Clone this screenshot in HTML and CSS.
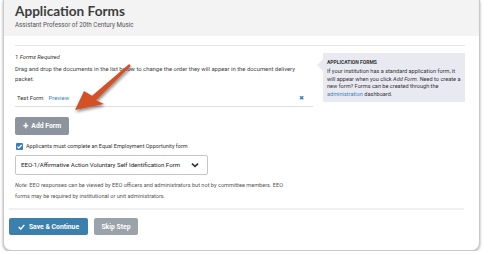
FILE: index.html
```html
<!DOCTYPE html>
<html>
<head>
	<title>Application Forms</title>
	<link rel="stylesheet" href="styles.css">
</head>
<body>
<div class="window">
	<div class="head">
		<h1>Application Forms</h1>
		<p class="sub">Assistant Professor of 20th Century Music</p>
	</div>
	<div class="content">
		<div class="rule"></div>
		<div class="cols">
			<div class="main">
				<p class="req">1 Forms Required</p>
				<p class="help">Drag and drop the documents in the list below to change the order they will appear in the document delivery packet.</p>
				<div class="item">
					<span class="name">Test Form</span>
					<a href="javascript:;" class="link">Preview</a>
					<span class="del">&#x2716;</span>
				</div>
				<a href="javascript:;" class="btn grey add"><span class="plus">+</span> Add Form</a>
				<label class="check"><span class="box"><svg width="7" height="7" viewBox="0 0 10 10"><path d="M2 5.2l2 2 4-4.4" fill="none" stroke="#fff" stroke-width="1.8"/></svg></span>Applicants must complete an Equal Employment Opportunity form</label>
				<div class="select">
					<span>EEO-1/Affirmative Action Voluntary Self Identification Form</span>
					<svg width="8" height="6" viewBox="0 0 10 6"><path d="M1.2 1.2l3.8 3.6 3.8-3.6" fill="none" stroke="#333" stroke-width="2"/></svg>
				</div>
				<p class="note"><i>Note:</i> EEO responses can be viewed by EEO officers and administrators but not by committee members. EEO forms may be required by institutional or unit administrators.</p>
			</div>
			<div class="side">
				<div class="tip">
					<b>APPLICATION FORMS</b>
					<p>If your institution has a standard application form, it will appear when you click <i>Add Form</i>. Need to create a new form? Forms can be created through the <a href="javascript:;" class="link">administration</a> dashboard.</p>
				</div>
			</div>
		</div>
		<div class="foot">
			<a href="javascript:;" class="btn blue"><svg width="7" height="6" viewBox="0 0 10 8"><path d="M1 4l3 3 5-6" fill="none" stroke="#fff" stroke-width="2"/></svg> Save &amp; Continue</a>
			<a href="javascript:;" class="btn grey skip">Skip Step</a>
		</div>
	</div>
	<svg class="arrow" width="483" height="254" viewBox="0 0 483 254">
		<defs>
			<filter id="sh" x="-20%" y="-20%" width="140%" height="140%">
				<feDropShadow dx="1" dy="2" stdDeviation="1.5" flood-color="#000" flood-opacity=".45"/>
			</filter>
		</defs>
		<path d="M75 110 L84 91 L92 95.8 L129.2 64.1 L130.8 65.9 L96 100.2 L104 104 Z" fill="#d35128" filter="url(#sh)"/>
	</svg>
</div>
</body>
</html>
```

FILE: styles.css
```css
*{margin:0;padding:0;box-sizing:border-box;text-decoration:none;}
body{background:#fff;font-family:Roboto,"Liberation Sans",sans-serif;color:#444;font-size:5.9px;line-height:10px;}
.window{position:relative;margin:0 3px 0 3px;width:477px;height:251px;border:1px solid #c9c9c9;border-top:none;border-radius:0 0 8px 8px;box-shadow:0 1px 3px rgba(0,0,0,.35);overflow:hidden;background:#fff;}
.head{height:36px;background:#f3f3f3;padding:2px 11px 0;}
h1{font-family:Lato,"Open Sans",sans-serif;font-weight:700;font-size:13.6px;line-height:19px;color:#3d3d3d;}
.sub{font-size:6.3px;line-height:9px;color:#555;}
.content{padding:9px 8px 0 11px;}
.rule{height:1px;background:#e6e6e6;margin:0 6px 0 0;}
.cols{display:flex;gap:10px;}
.main{width:298px;padding-top:6px;}
.req{font-style:italic;color:#333;}
.help{margin-top:2px;padding-right:4px;}
.item{display:flex;align-items:center;height:18px;margin-top:5px;border-bottom:1px solid #ddd;padding-left:2px;color:#333;}
.link{color:#3a86c3;}
.item .link{margin-left:5px;}
.del{margin-left:auto;margin-right:9px;color:#3a7fb8;font-size:6px;}
.btn{display:inline-flex;align-items:center;justify-content:center;color:#fff;font-weight:700;font-size:6.8px;border-radius:2px;}
.grey{background:#8c959e;}
.add{margin-top:10px;width:54px;height:18px;}
.plus{font-size:10px;margin-right:3px;line-height:10px;}
.check{display:flex;align-items:center;margin-top:6px;color:#333;font-size:5.5px;}
.box{display:inline-flex;align-items:center;justify-content:center;width:7px;height:7px;background:#3a7fb8;border-radius:1px;margin:0 3px 0 1px;}
.select{display:flex;align-items:center;justify-content:space-between;margin-top:4px;width:193px;height:20px;border:1px solid #c6c6c6;border-radius:2px;padding:0 8px 0 5px;color:#222;font-size:6.1px;}
.note{margin-top:5px;font-size:5.6px;line-height:10.5px;color:#555;padding-right:18px;}
.side{padding-top:7px;width:142px;}
.tip{position:relative;background:#e9e9f1;padding:6px 4px 4px 4px;font-size:5.6px;line-height:7.5px;color:#333;}
.tip:before{content:"";position:absolute;left:-6px;top:6px;border:6px solid transparent;border-left:none;border-right-color:#e9e9f1;}
.tip b{display:block;font-size:5px;color:#333;}
.tip p{margin-top:1.75px;}
.foot{display:flex;gap:6px;margin:7px 7px 0 -6px;padding-top:8px;border-top:2px solid #f0f0f0;}
.blue{background:#3b80ad;width:79px;height:17px;gap:4px;}
.skip{background:#9aa2aa;width:44px;height:17px;}
.arrow{position:absolute;left:-4px;top:0;pointer-events:none;}
```
